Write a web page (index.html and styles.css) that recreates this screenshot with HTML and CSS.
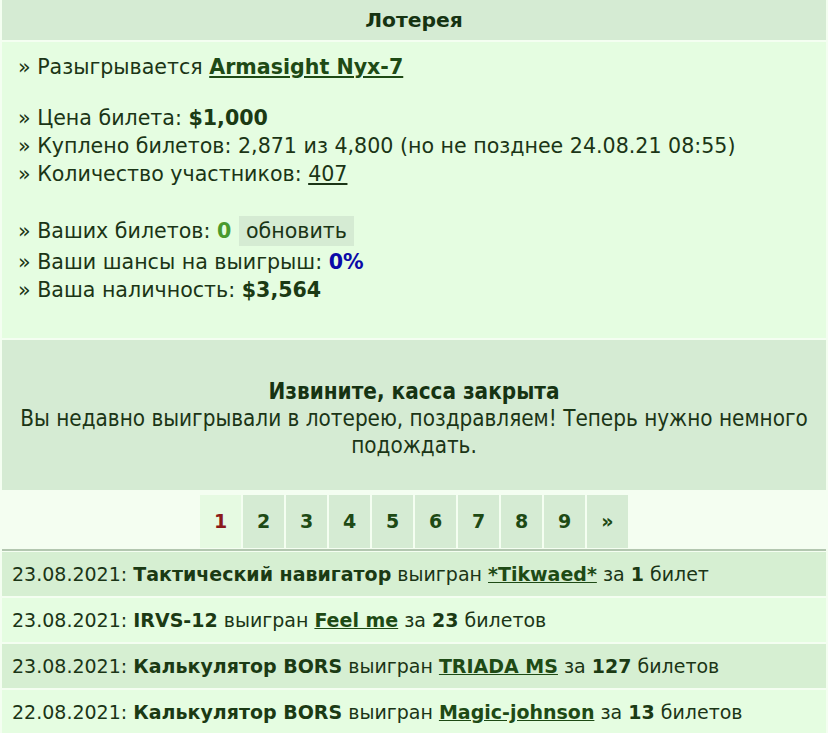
FILE: index.html
```html
<!DOCTYPE html>
<html>
<head>
  <meta charset="utf-8">
  <title>Лотерея</title>
  <link rel="stylesheet" href="styles.css">
</head>
<body>
  <div class="page">
    <div class="title">Лотерея</div>

    <div class="info">
      <div class="group">
        <div class="line">» Разыгрывается <a href="#" class="prize">Armasight Nyx-7</a></div>
      </div>
      <div class="group">
        <div class="line">» Цена билета: <b>$1,000</b></div>
        <div class="line">» Куплено билетов: 2,871 из 4,800 (но не позднее 24.08.21 08:55)</div>
        <div class="line">» Количество участников: <a href="#" class="plain">407</a></div>
      </div>
      <div class="group last">
        <div class="line tall">» Ваших билетов: <b class="mine">0</b> <span class="refresh">обновить</span></div>
        <div class="line">» Ваши шансы на выигрыш: <b class="chance">0%</b></div>
        <div class="line">» Ваша наличность: <b>$3,564</b></div>
      </div>
    </div>

    <div class="closed">
      <div class="closed-title">Извините, касса закрыта</div>
      <div>Вы недавно выигрывали в лотерею, поздравляем! Теперь нужно немного подождать.</div>
    </div>

    <div class="pager">
      <span class="cell current">1</span>
      <a href="#" class="cell">2</a>
      <a href="#" class="cell">3</a>
      <a href="#" class="cell">4</a>
      <a href="#" class="cell">5</a>
      <a href="#" class="cell">6</a>
      <a href="#" class="cell">7</a>
      <a href="#" class="cell">8</a>
      <a href="#" class="cell">9</a>
      <a href="#" class="cell">»</a>
    </div>

    <div class="history">
      <div class="row odd">23.08.2021: <b>Тактический навигатор</b> выигран <a href="#" class="prize">*Tikwaed*</a> за <b>1</b> билет</div>
      <div class="row">23.08.2021: <b>IRVS-12</b> выигран <a href="#" class="prize">Feel me</a> за <b>23</b> билетов</div>
      <div class="row odd">23.08.2021: <b>Калькулятор BORS</b> выигран <a href="#" class="prize">TRIADA MS</a> за <b>127</b> билетов</div>
      <div class="row">22.08.2021: <b>Калькулятор BORS</b> выигран <a href="#" class="prize">Magic-johnson</a> за <b>13</b> билетов</div>
    </div>
  </div>
</body>
</html>
```

FILE: styles.css
```css
body {
  margin: 0;
  background: #f4fef1;
  font-family: "DejaVu Sans", Verdana, sans-serif;
  font-size: 20.6px;
  color: #1b3516;
}
.page {
  padding: 0 2px;
  display: flex;
  flex-direction: column;
  gap: 2px;
}
b {
  color: #1b3a14;
}
a {
  color: #1b3516;
}
.prize {
  font-weight: bold;
  color: #1e4a15;
}
.title {
  background: #d5ebd3;
  text-align: center;
  font-weight: bold;
  font-size: 20.3px;
  line-height: 40px;
  color: #163312;
}
.info {
  background: #e5fde1;
  padding: 11px 16px 34px;
}
.group + .group {
  margin-top: 23px;
}
.group.last {
  margin-top: 27px;
}
.line {
  line-height: 28px;
}
.line.tall {
  line-height: 33px;
}
.mine {
  color: #4a9a2e;
}
.chance {
  color: #0a0aa8;
}
.refresh {
  display: inline-block;
  vertical-align: middle;
  line-height: 30px;
  background: #d5ebd3;
  padding: 0 7px;
  margin: -3px 0 0 1px;
}
/* narrow face for the closed-till notice */
.closed {
  background: #d5ebd3;
  text-align: center;
  font-family: "DejaVu Sans Condensed", "DejaVu Sans", sans-serif;
  font-stretch: condensed;
  font-size: 22.3px;
  line-height: 27px;
  padding: 38px 10px 31px;
}
.closed-title {
  font-weight: bold;
  color: #163312;
}
.pager {
  display: flex;
  justify-content: center;
  gap: 2px;
  padding: 3px 0 1px;
  border-bottom: 2px solid #b3c7b0;
  margin-bottom: -1px;
}
.cell {
  width: 41px;
  line-height: 53px;
  text-align: center;
  font-size: 19px;
  font-weight: bold;
  text-decoration: none;
  background: #d5ebd3;
  color: #1e4a15;
}
.cell.current {
  background: #e6fae2;
  color: #8b1a1a;
}
.history {
  display: flex;
  flex-direction: column;
  gap: 2px;
}
.row {
  background: #e5fde1;
  line-height: 44px;
  padding-left: 10px;
  font-size: 19px;
}
.row.odd {
  background: #d6efd2;
}
```
